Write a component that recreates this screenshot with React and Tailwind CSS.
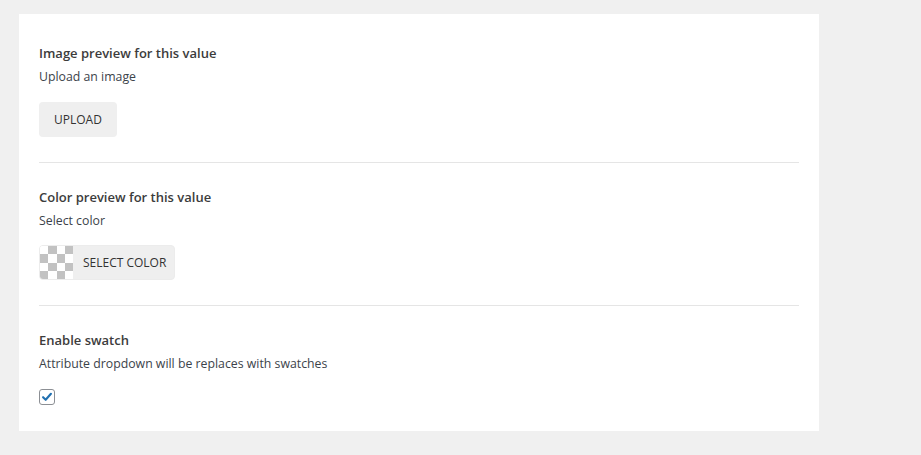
export default function App() {
  return (
    <main
      className="min-h-screen bg-[#f0f0f0] pt-[14px] pl-[19px]"
      style={{ fontFamily: '"Open Sans", "Noto Sans", sans-serif' }}
    >
      <div className="w-[800px] bg-white px-5 py-[5px] text-[12.3px] text-[#3c434a]">
        <section className="border-b border-[#e5e5e5] pt-6 pb-[25px]">
          <h3 className="text-[13px] font-semibold leading-5 text-[#3c3c3c]">
            Image preview for this value
          </h3>
          <p className="mt-1 leading-5">Upload an image</p>
          <button className="mt-[15px] h-[35px] rounded bg-[#efefef] px-[15px] text-[12px] uppercase text-[#333]">
            Upload
          </button>
        </section>

        <section className="border-b border-[#e5e5e5] pt-6 pb-[25px]">
          <h3 className="text-[13px] font-semibold leading-5 text-[#3c3c3c]">
            Color preview for this value
          </h3>
          <p className="mt-1 leading-5">Select color</p>
          <button className="mt-[14px] flex h-[35px] items-stretch overflow-hidden rounded border border-[#ececec] bg-[#efefef] text-[12px] uppercase text-[#333]">
            <span className="grid w-[33px] grid-cols-4 grid-rows-4 bg-white">
              {Array.from({ length: 16 }).map((_, i) => {
                const row = Math.floor(i / 4);
                const dark = (i + row) % 2 === 1;
                return (
                  <span
                    key={i}
                    className={dark ? "bg-[#c2c2c2]" : "bg-white"}
                  />
                );
              })}
            </span>
            <span className="flex items-center pl-[10px] pr-[8px]">
              Select color
            </span>
          </button>
        </section>

        <section className="pt-6 pb-[21px]">
          <h3 className="text-[13px] font-semibold leading-5 text-[#3c3c3c]">
            Enable swatch
          </h3>
          <p className="mt-1 leading-5">
            Attribute dropdown will be replaces with swatches
          </p>
          <div className="mt-[15px] flex h-4 w-4 items-center justify-center rounded-[3px] border border-[#8c8f94] bg-white">
            <svg viewBox="0 0 16 16" className="h-[14px] w-[14px]">
              <path
                d="M3.5 8.2 L6.5 11.2 L12.5 4.3"
                fill="none"
                stroke="#2271b1"
                strokeWidth="2.4"
                strokeLinecap="round"
                strokeLinejoin="round"
              />
            </svg>
          </div>
        </section>
      </div>
    </main>
  );
}
